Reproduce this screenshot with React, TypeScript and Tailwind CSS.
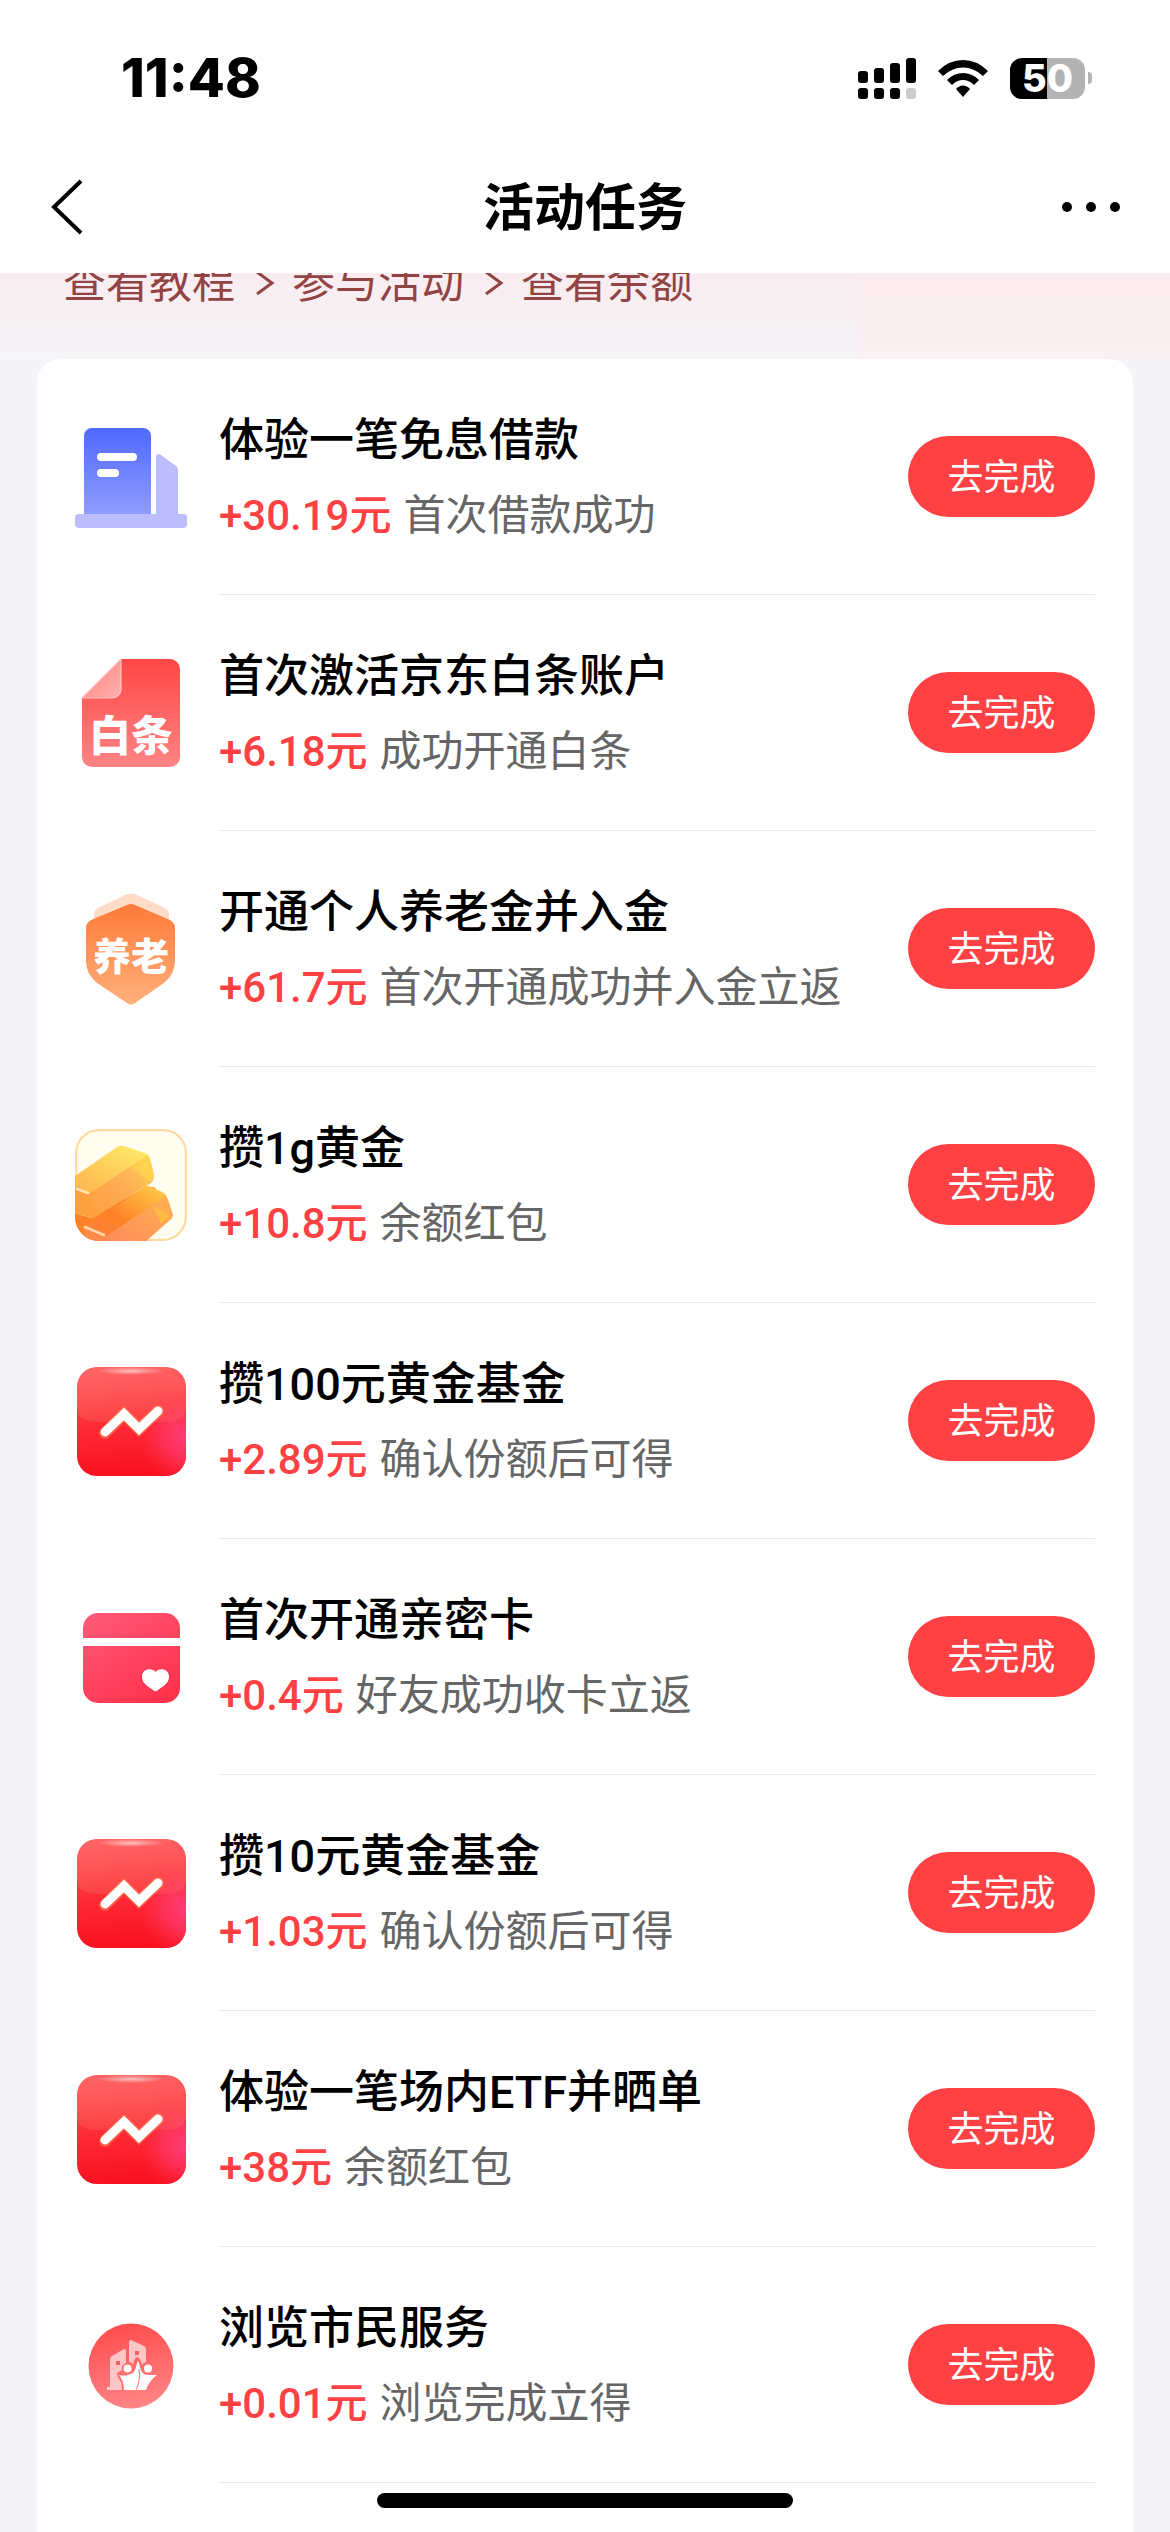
import type { ReactNode } from "react";

const cjk = "font-['Roboto','Noto_Sans_CJK_SC',sans-serif]";

function LoanIcon() {
	return (
		<svg viewBox="0 0 112 112" className="size-28 shrink-0" aria-hidden="true">
			<defs>
				<linearGradient id="loan" x1="0" y1="0" x2="0" y2="1">
					<stop offset="0" stopColor="#4f68ff" />
					<stop offset="1" stopColor="#8f9cff" />
				</linearGradient>
			</defs>
			<path d="M9 15a8 8 0 0 1 8-8h51a8 8 0 0 1 8 8v78H9z" fill="url(#loan)" />
			<rect x="22" y="32" width="40" height="8" rx="4" fill="#fff" />
			<rect x="22" y="48" width="22" height="8" rx="4" fill="#fff" />
			<path d="M81 36c0-3 3-4 5-2l15 11q2 2 2 4v44H81z" fill="#bcbdff" />
			<rect y="93" width="112" height="14" rx="4" fill="#bcbdff" />
		</svg>
	);
}

function BaitiaoIcon() {
	return (
		<svg viewBox="0 0 112 112" className="size-28 shrink-0" aria-hidden="true">
			<defs>
				<linearGradient id="paper" x1="0" y1="0" x2="0" y2="1">
					<stop offset="0" stopColor="#ff4744" />
					<stop offset="1" stopColor="#ff8485" />
				</linearGradient>
				<linearGradient id="fold" x1="0" y1="0" x2="1" y2="1">
					<stop offset="0.3" stopColor="#ff8b88" />
					<stop offset="1" stopColor="#ffb3b2" />
				</linearGradient>
			</defs>
			<path
				d="M46 2h49a10 10 0 0 1 10 10v88a10 10 0 0 1-10 10H17a10 10 0 0 1-10-10V41z"
				fill="url(#paper)"
			/>
			<path
				d="M46 2v30a9 9 0 0 1-9 9H7z"
				fill="url(#fold)"
				stroke="#ffc4c2"
				strokeWidth="1.2"
			/>
			<text x="14" y="94" fontSize="42" fontWeight="900" fill="#fff" className={cjk}>
				白条
			</text>
		</svg>
	);
}

function PensionIcon() {
	return (
		<svg viewBox="0 0 112 112" className="size-28 shrink-0" aria-hidden="true">
			<defs>
				<linearGradient id="pension" x1="0" y1="0" x2="0" y2="1">
					<stop offset="0" stopColor="#ff7a38" />
					<stop offset="1" stopColor="#ffb07c" />
				</linearGradient>
			</defs>
			<path
				d="M50 2q6-3 12 0l28 13q4 2 4 7v20H19V22q0-5 4-7z"
				fill="#ffdcc8"
			/>
			<path
				d="M52 12q4-2 8 0l35 15q5 3 5 8v33q0 13-11 22l-29 20q-4 3-8 0L22 90Q11 81 11 68V35q0-5 5-8z"
				fill="url(#pension)"
			/>
			<text x="18" y="77" fontSize="38" fontWeight="900" fill="#fff" className={cjk}>
				养老
			</text>
		</svg>
	);
}

function GoldIcon() {
	return (
		<svg viewBox="0 0 112 112" className="size-28 shrink-0" aria-hidden="true">
			<defs>
				<clipPath id="goldClip">
					<rect width="112" height="112" rx="24" />
				</clipPath>
				<linearGradient id="goldTop" x1="0" y1="1" x2="1" y2="0">
					<stop offset="0" stopColor="#ffb24c" />
					<stop offset="1" stopColor="#ffee6c" />
				</linearGradient>
				<linearGradient id="goldSide" x1="0" y1="1" x2="1" y2="0">
					<stop offset="0" stopColor="#ff9d3c" />
					<stop offset="0.5" stopColor="#ffad55" />
					<stop offset="1" stopColor="#ffd257" />
				</linearGradient>
				<linearGradient id="goldLow" x1="0" y1="1" x2="1" y2="0">
					<stop offset="0" stopColor="#ff8340" />
					<stop offset="0.4" stopColor="#ff8228" />
					<stop offset="1" stopColor="#ffd24a" />
				</linearGradient>
				<linearGradient id="goldFront" x1="0" y1="1" x2="1" y2="0">
					<stop offset="0" stopColor="#ff8a5c" />
					<stop offset="1" stopColor="#ffb24e" />
				</linearGradient>
			</defs>
			<g clipPath="url(#goldClip)">
				<rect width="112" height="112" fill="#fffdf0" />
				<rect
					x="1"
					y="1"
					width="110"
					height="110"
					rx="23"
					fill="none"
					stroke="#ffd9a0"
					strokeWidth="2.5"
				/>
				<path d="M0 84l16 5 56-32 9 2-50 53H0z" fill="#ff8226" />
				<path d="M8 99l63-42q4 0 18 7 3 2 3 5l-62 39z" fill="url(#goldLow)" />
				<path d="M30 108l61-41q2 2 7 19 0 3-3 5l-26 23H30z" fill="url(#goldFront)" />
				<path d="M78 77l17 10-9 7z" fill="#ffc83c" opacity="0.7" />
				<path d="M8 99l22 8v5H12z" fill="#ff8a4c" />
				<path d="M10 98l19 8" stroke="#ffd9a8" strokeWidth="2.5" strokeLinecap="round" />
				<path d="M0 47l42-29q3-2 7-1l21 7q3 1 4 4L15 65 0 60z" fill="url(#goldTop)" />
				<path d="M15 64l58-38q3 5 6 20 0 5-3 8L18 89q-2 1-3-2z" fill="url(#goldSide)" />
				<path d="M56 38l17-12q4 7 6 21l-4 6z" fill="#ffd84a" opacity="0.6" />
				<path d="M0 60l15 5 1 24-16-5z" fill="#ffa040" />
				<path d="M2 60l11 4" stroke="#ffe3ae" strokeWidth="2.5" strokeLinecap="round" />
			</g>
		</svg>
	);
}

function FundIcon() {
	return (
		<svg viewBox="0 0 112 112" className="size-28 shrink-0" aria-hidden="true">
			<defs>
				<linearGradient id="fund" x1="0.3" y1="0" x2="0.4" y2="1">
					<stop offset="0" stopColor="#ff5656" />
					<stop offset="0.55" stopColor="#fd2a35" />
					<stop offset="1" stopColor="#f9101f" />
				</linearGradient>
				<radialGradient id="fundPink" cx="1" cy="0.65" r="0.45">
					<stop offset="0" stopColor="#ff4184" stopOpacity="0.9" />
					<stop offset="0.5" stopColor="#ff3a6c" stopOpacity="0.6" />
					<stop offset="1" stopColor="#ff2a40" stopOpacity="0" />
				</radialGradient>
				<linearGradient id="fundGloss" x1="0" y1="0" x2="0" y2="1">
					<stop offset="0" stopColor="#fff" stopOpacity="0.08" />
					<stop offset="1" stopColor="#ff7a60" stopOpacity="0.22" />
				</linearGradient>
				<radialGradient id="fundShine">
					<stop offset="0" stopColor="#fff" stopOpacity="0.6" />
					<stop offset="1" stopColor="#fff" stopOpacity="0" />
				</radialGradient>
			</defs>
			<rect x="2" y="2" width="109" height="109" rx="20" fill="url(#fund)" />
			<rect x="2" y="2" width="109" height="109" rx="20" fill="url(#fundPink)" />
			<path
				d="M2 22A20 20 0 0 1 22 2h69a20 20 0 0 1 20 20v24q-4 11-20 11H22Q6 57 2 46z"
				fill="url(#fundGloss)"
			/>
			<ellipse cx="56" cy="6" rx="34" ry="4" fill="url(#fundShine)" />
			<path
				d="M30 68l19-19 15 15 19-18"
				fill="none"
				stroke="#ff8a50"
				strokeOpacity="0.5"
				strokeWidth="12"
				strokeLinecap="round"
			/>
			<path
				d="M30 67l19-18 15 15 19-18"
				fill="none"
				stroke="#fff"
				strokeWidth="9"
				strokeLinecap="round"
			/>
		</svg>
	);
}

function IntimateCardIcon() {
	return (
		<svg viewBox="0 0 112 112" className="size-28 shrink-0" aria-hidden="true">
			<defs>
				<linearGradient id="love" gradientUnits="userSpaceOnUse" x1="20" y1="12" x2="80" y2="102">
					<stop offset="0" stopColor="#ff5878" />
					<stop offset="1" stopColor="#ff324c" />
				</linearGradient>
			</defs>
			<path d="M8 37V27a15 15 0 0 1 15-15h67a15 15 0 0 1 15 15v10z" fill="url(#love)" />
			<path d="M8 45h97v42a15 15 0 0 1-15 15H23A15 15 0 0 1 8 87z" fill="url(#love)" />
			<path
				d="M80.500 71C77 66.500 67 67.500 67 76c0 7 8 10.500 11.500 13.500q2 1.500 4 0C86 86.500 94 83 94 76c0-8.500-10-9.500-13.500-5z"
				fill="#fff"
			/>
		</svg>
	);
}

function CityIcon() {
	return (
		<svg viewBox="0 0 112 112" className="size-28 shrink-0" aria-hidden="true">
			<defs>
				<linearGradient id="city" x1="0.4" y1="0" x2="0.6" y2="1">
					<stop offset="0" stopColor="#ff4d4e" />
					<stop offset="1" stopColor="#ff8687" />
				</linearGradient>
			</defs>
			<circle cx="56" cy="57" r="42.500" fill="url(#city)" />
			<path
				d="M32 81v-3h3V50q0-2 2-3l12-7q2 0 2 2v12q-5 2-4 7l-5 3 1 5q4 3 4 12z"
				fill="#ffc6c8"
			/>
			<path d="M54 53V33q0-2 2-2l13 6q2 1 2 3v13q-3 1-4 3-2-8-5-8-3 1-4 8-1-3-4-3z" fill="#ffc6c8" />
			<rect x="41" y="52" width="4" height="4" fill="#ff5f60" />
			<rect x="60" y="42" width="4" height="4" fill="#ff5f60" />
			<circle cx="52.500" cy="59.500" r="4" fill="#fff" />
			<circle cx="73" cy="59.500" r="4" fill="#fff" />
			<path
				d="M63 52q1 1 2 6c1 5 4 8 8 8q5 0 9 0-8 6-11 15H49q0-9-5-15 5 1 9 0c4-1 7-3 8-8q1-5 2-6z"
				fill="#fff"
			/>
			<path d="M64 60q2 11-3 21" fill="none" stroke="#ff7475" strokeWidth="1" />
		</svg>
	);
}

type Task = {
	icon: ReactNode;
	title: string;
	reward: string;
	note: string;
};

const tasks: Task[] = [
	{ icon: <LoanIcon />, title: "体验一笔免息借款", reward: "+30.19元", note: "首次借款成功" },
	{ icon: <BaitiaoIcon />, title: "首次激活京东白条账户", reward: "+6.18元", note: "成功开通白条" },
	{ icon: <PensionIcon />, title: "开通个人养老金并入金", reward: "+61.7元", note: "首次开通成功并入金立返" },
	{ icon: <GoldIcon />, title: "攒1g黄金", reward: "+10.8元", note: "余额红包" },
	{ icon: <FundIcon />, title: "攒100元黄金基金", reward: "+2.89元", note: "确认份额后可得" },
	{ icon: <IntimateCardIcon />, title: "首次开通亲密卡", reward: "+0.4元", note: "好友成功收卡立返" },
	{ icon: <FundIcon />, title: "攒10元黄金基金", reward: "+1.03元", note: "确认份额后可得" },
	{ icon: <FundIcon />, title: "体验一笔场内ETF并晒单", reward: "+38元", note: "余额红包" },
	{ icon: <CityIcon />, title: "浏览市民服务", reward: "+0.01元", note: "浏览完成立得" },
];

function StatusBar() {
	return (
		<div className="flex h-[144px] items-center justify-between pt-3 pr-[78px] pl-[121px]">
			<span className="font-['Inter',sans-serif] text-[54px] leading-none font-extrabold">11:48</span>
			<div className="flex items-center gap-[22px]">
				<svg width="58" height="41" viewBox="0 0 58 41" aria-label="信号">
					<rect x="0" y="13" width="10" height="12" rx="3" />
					<rect x="16" y="10" width="10" height="15" rx="3" />
					<rect x="32" y="5" width="10" height="20" rx="3" />
					<rect x="48" y="0" width="10" height="25" rx="3" />
					<rect x="0" y="30" width="10" height="11" rx="3" />
					<rect x="16" y="30" width="10" height="11" rx="3" />
					<rect x="32" y="30" width="10" height="11" rx="3" />
					<rect x="48" y="30" width="10" height="11" rx="3" fill="#ccc" />
				</svg>
				<svg width="50" height="41" viewBox="0 0 50 41" aria-label="Wi-Fi">
					<path d="M0 13Q11 2 25 2t25 11l-5 5Q36 9.500 25 9.500T5 18z" />
					<path d="M9 22q7-7 16-7t16 7l-5 5q-5-5-11-5t-11 5z" />
					<path d="M18 31q3-3.500 7-3.500t7 3.500l-7 8z" />
				</svg>
				<div className="flex items-center gap-[3px]">
					<div className="flex h-[41px] w-[75px] items-center justify-center rounded-xl bg-[linear-gradient(90deg,#000_50%,#b3b3b3_50%)] font-['Inter',sans-serif] text-[38px] leading-none font-extrabold text-white">
						50
					</div>
					<div className="h-3 w-1 rounded-r-full bg-[#b3b3b3]" />
				</div>
			</div>
		</div>
	);
}

function NavBar() {
	return (
		<header className="flex h-[129px] items-center justify-between px-[50px] pb-1">
			<button type="button" aria-label="返回" className="flex w-16">
				<svg width="36" height="56" viewBox="0 0 36 56" fill="none" stroke="#000" strokeWidth="4">
					<path d="M31 2L4 28l27 26" />
				</svg>
			</button>
			<h1 className="pt-1 text-[51px] leading-[72px] font-bold">活动任务</h1>
			<button type="button" aria-label="更多" className="flex w-16 justify-end gap-[14px]">
				<span className="size-[10px] rounded-full bg-black" />
				<span className="size-[10px] rounded-full bg-black" />
				<span className="size-[10px] rounded-full bg-black" />
			</button>
		</header>
	);
}

function StepArrow() {
	return (
		<svg width="57" height="28" viewBox="0 0 57 28" fill="none" stroke="#924444" strokeWidth="3">
			<path d="M22 3l15 11-15 11" />
		</svg>
	);
}

function TaskRow({ icon, title, reward, note }: Task) {
	return (
		<li className="flex h-[236px] items-center gap-8">
			{icon}
			<div className="flex h-full min-w-0 flex-1 items-center justify-between border-b border-[#e8e8ea]">
				<div className="pt-0.5">
					<h2 className="text-[45px] leading-[75px] font-medium">{title}</h2>
					<p className="flex gap-3 text-[42px] leading-[75px]">
						<span className="font-medium text-[#ff4144]">{reward}</span>
						<span className="text-[#666]">{note}</span>
					</p>
				</div>
				<button
					type="button"
					className="h-[81px] w-[187px] rounded-full bg-[#ff4144] pt-0.5 text-[36px] leading-none text-white"
				>
					去完成
				</button>
			</div>
		</li>
	);
}

export default function App() {
	return (
		<div className={`flex min-h-screen flex-col bg-[#f5f5f9] text-black ${cjk}`}>
			<div className="bg-white">
				<StatusBar />
				<NavBar />
			</div>
			<div className="flex h-[86px] overflow-hidden bg-linear-to-b from-[#f9ecf0] to-[#f6f5f8]">
				<div className="-mt-3 flex h-11 flex-1 items-center pl-[63px] text-[43px] leading-[44px] text-[#924444]">
					<span>查看教程</span>
					<StepArrow />
					<span>参与活动</span>
					<StepArrow />
					<span>查看余额</span>
				</div>
				<div className="w-[312px] bg-linear-to-b from-[#fbecef] to-[#fbf0f2]" />
			</div>
			<main className="mx-[37px] flex-1 rounded-t-3xl bg-white px-[38px]">
				<ul>
					{tasks.map((task) => (
						<TaskRow key={task.title} {...task} />
					))}
				</ul>
			</main>
			<div className="fixed bottom-6 left-1/2 h-[15px] w-[416px] -translate-x-1/2 rounded-full bg-black" />
		</div>
	);
}
